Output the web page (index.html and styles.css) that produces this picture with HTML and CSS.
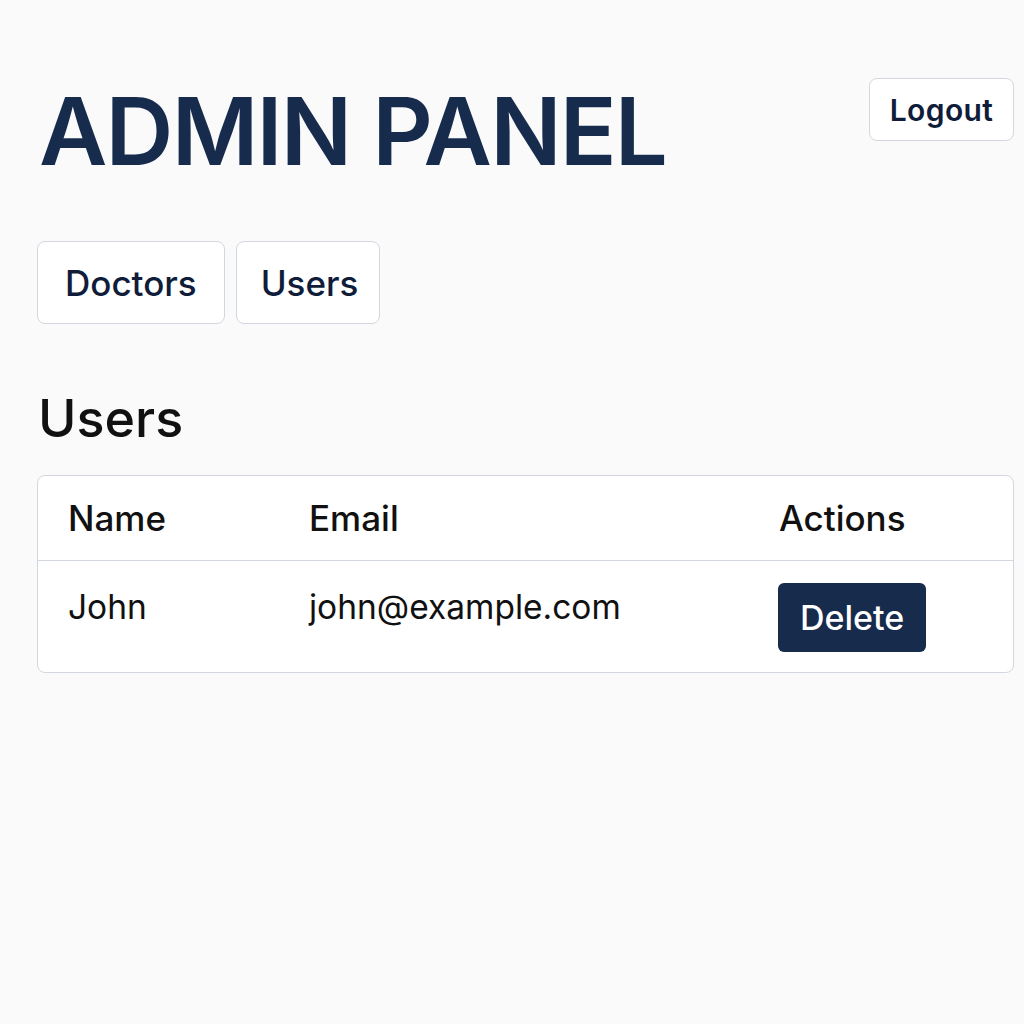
FILE: index.html
```html
<!DOCTYPE html>
<html>
<head>
<meta charset="utf-8">
<link rel="stylesheet" href="styles.css">
</head>
<body>
<div class="page">
  <header class="top">
    <h1 class="title">ADMIN PANEL</h1>
    <button class="btn-outline logout">Logout</button>
  </header>
  <nav class="tabs">
    <button class="btn-outline tab">Doctors</button>
    <button class="btn-outline tab tab-compact">Users</button>
  </nav>
  <h2 class="section-title">Users</h2>
  <div class="table-card">
    <table class="table">
      <thead>
        <tr><th class="col-name">Name</th><th class="col-email">Email</th><th>Actions</th></tr>
      </thead>
      <tbody>
        <tr><td>John</td><td>john@example.com</td><td><button class="btn-delete">Delete</button></td></tr>
      </tbody>
    </table>
  </div>
</div>
</body>
</html>
```
FILE: styles.css
```css
* { box-sizing: border-box; }
html, body { margin: 0; padding: 0; background: #fafafa; }
body { font-family: Inter, "Noto Sans", sans-serif; color: #111; }
.page { padding: 0 10px 0 37px; }
.top { display: flex; justify-content: space-between; align-items: flex-start; padding-top: 78px; height: 163px; }
.title { margin: 6px 0 0 2px; font-size: 94px; font-weight: 600; color: #172b4d; line-height: 1; letter-spacing: -1.8px; }
.btn-outline { font-family: inherit; background: #fff; border: 1.5px solid #d3d7df; border-radius: 8px; color: #0f1c3a; cursor: pointer; }
.logout { width: 145px; height: 63px; font-size: 30px; font-weight: 600; padding: 0; letter-spacing: 0.4px; }
.tabs { display: flex; gap: 11px; margin-top: 78px; }
.tab { height: 83px; padding: 0 27px; font-size: 35px; font-weight: 500; }
.tab-compact { padding: 0 21px 0 24px; }
.section-title { margin: 64px 0 0 1px; font-size: 52px; font-weight: 500; color: #111; line-height: 1.2; }
.table-card { margin-top: 25px; background: #fff; border: 1.5px solid #d3d7df; border-radius: 8px; overflow: hidden; }
.table { width: 100%; border-collapse: collapse; }
.table th { text-align: left; font-size: 35px; font-weight: 500; height: 84px; padding: 0 0 0 30px; border-bottom: 1.5px solid #d3d7df; color: #111; }
.table td { text-align: left; font-size: 33.5px; font-weight: 400; height: 112px; padding: 0 0 0 30px; vertical-align: top; padding-top: 26px; color: #111; }
.col-name { width: 241px; }
.col-email { width: 470px; }
.btn-delete { font-family: inherit; background: #172b4d; color: #fff; border: none; border-radius: 6px; font-size: 34px; font-weight: 500; height: 69px; padding: 0 22px; margin-top: -4px; margin-left: -1px; }
```
